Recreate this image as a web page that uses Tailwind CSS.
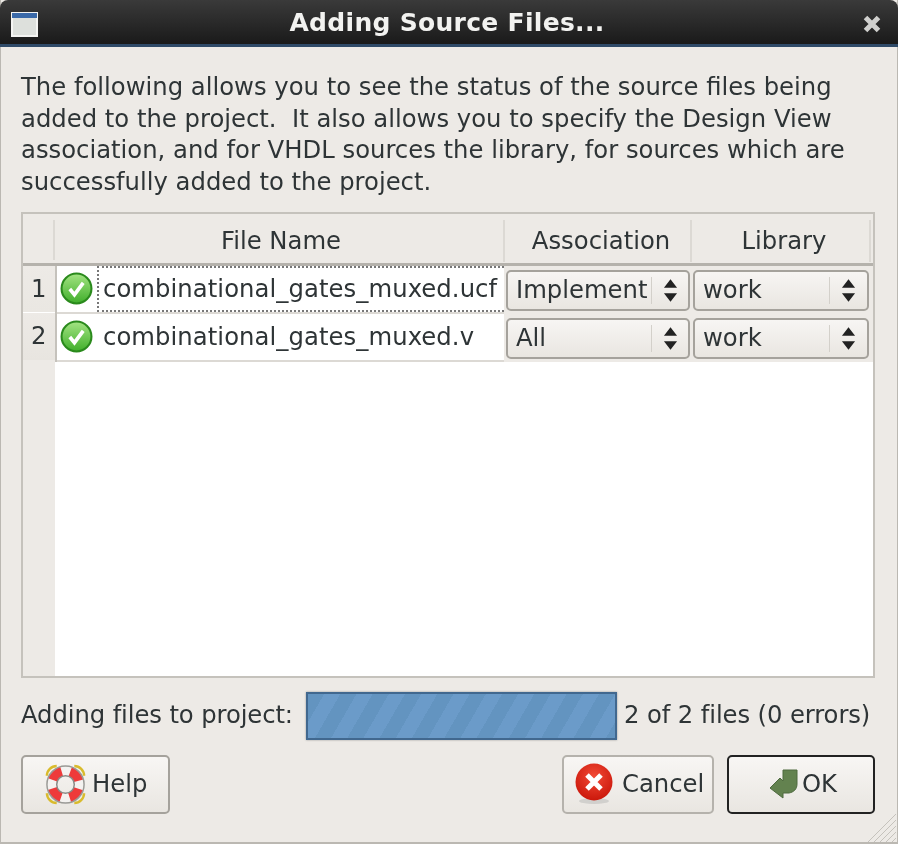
<!DOCTYPE html>
<html lang="en">
<head>
  <meta charset="UTF-8">
  <title>Adding Source Files...</title>
  <script src="https://cdn.jsdelivr.net/npm/@tailwindcss/browser@4"></script>
</head>
<body class="relative bg-[#edeae6] font-['DejaVu_Sans',sans-serif] text-[#2e3436] w-[898px] h-[844px] overflow-hidden blur-[0.6px] shadow-[inset_1px_-2px_0_#bbb8b2,inset_-1px_0_0_#bbb8b2]">
  <!-- title bar -->
  <div class="relative h-[47px] rounded-t-[8px] bg-gradient-to-b from-[#3a3a3a] via-[#2a2a2a] to-[#1a1a1a] flex items-center justify-center border-b-[3px] border-b-[#2f4a68] pt-[2px] pr-[4px]">
    <svg class="absolute left-[11px] top-[12px]" width="27" height="25" viewBox="0 0 27 25">
      <rect x="1" y="1" width="25" height="23" fill="#dde0dc" stroke="#f4f4f2" stroke-width="2"/>
      <rect x="1" y="1" width="25" height="5" fill="#3a69a8"/>
    </svg>
    <span class="text-[25px] font-bold text-[#f2f2f0] tracking-[0.3px]">Adding Source Files...</span>
    <svg class="absolute right-[17px] top-[15px]" width="18" height="18" viewBox="0 0 18 18">
      <path d="M2.5 2.5L15.5 15.5M15.5 2.5L2.5 15.5" stroke="#d0d0ce" stroke-width="5"/>
    </svg>
  </div>

  <div class="pl-[21px] pr-[23px] text-[24.3px]">
    <p class="pt-[24px] leading-[31.7px] whitespace-pre">The following allows you to see the status of the source files being
added to the project.  It also allows you to specify the Design View
association, and for VHDL sources the library, for sources which are
successfully added to the project.</p>

    <!-- table -->
    <div class="mt-[14px] h-[466px] w-[854px] border-2 border-[#c5c2bc] flex flex-col bg-white">
      <div class="flex h-[52px] bg-[#edeae6] border-b-[3px] border-b-[#b5b2ac] pl-[1px] pt-[6px]">
        <div class="w-[31px] h-[40px] border-r-2 border-r-[#dcd9d4]"></div>
        <div class="w-[450px] h-[42px] pl-[4px] border-r-2 border-r-[#dcd9d4] flex items-center justify-center">File Name</div>
        <div class="w-[187px] h-[42px] pl-[7px] border-r-2 border-r-[#dcd9d4] flex items-center justify-center">Association</div>
        <div class="w-[179px] h-[42px] pl-[7px] border-r-2 border-r-[#dcd9d4] flex items-center justify-center">Library</div>
      </div>
      <div class="flex-1 flex">
        <div class="w-[32px] bg-[#edeae6] flex flex-col">
          <div class="h-[47px] pl-[8px] flex items-center bg-gradient-to-b from-[#edeae6] to-[#eae7e2] border-b border-b-white">1</div>
          <div class="h-[47px] pl-[8px] flex items-center bg-gradient-to-b from-[#edeae6] to-[#e8e5e0]">2</div>
        </div>
        <div class="flex-1">
          <div class="flex h-[48px] border-l-2 border-l-[#c5c2bc]">
            <div class="w-[447px] h-[48px] flex items-center border-b-2 border-b-[#dcd9d4]">
              <svg class="ml-[3px] shrink-0" width="33" height="33" viewBox="0 0 32 32">
                <defs><linearGradient id="g1" x1="0" y1="0" x2="0" y2="1"><stop offset="0" stop-color="#a4e483"/><stop offset="1" stop-color="#3fae2a"/></linearGradient></defs>
                <circle cx="16" cy="16" r="14.5" fill="url(#g1)" stroke="#2a8a1c" stroke-width="2"/>
                <path d="M9.5 16.5L14 22L22.5 10.5" fill="none" stroke="#fff" stroke-width="3.5"/>
              </svg>
              <div class="ml-[4px] h-[46px] flex-1 flex items-center pl-[4px] border-2 border-dotted border-[#777] border-r-0 overflow-hidden whitespace-nowrap tracking-[0.06px]">combinational_gates_muxed.ucf</div>
            </div>
            <div class="w-[187px] pl-[2px] pr-[1px] pt-[4px] bg-[#edeae6]"><div class="h-[41px] rounded-[5px] border-2 border-[#a5a29c] bg-gradient-to-b from-[#f7f5f3] to-[#e9e6e1] flex items-center pl-[8px] relative"><span>Implement</span><span class="absolute right-[36px] top-[5px] w-[1px] h-[27px] bg-[#d3d0ca]"></span><svg class="absolute right-[10px] top-[6px]" width="15" height="25" viewBox="0 0 16 26"><path d="M8 1L15 10H1ZM1 16H15L8 25Z" fill="#222"/></svg></div></div>
            <div class="w-[182px] pl-[2px] pr-[4px] pt-[4px] bg-[#edeae6]"><div class="h-[41px] rounded-[5px] border-2 border-[#a5a29c] bg-gradient-to-b from-[#f7f5f3] to-[#e9e6e1] flex items-center pl-[8px] relative"><span>work</span><span class="absolute right-[37px] top-[5px] w-[1px] h-[27px] bg-[#d3d0ca]"></span><svg class="absolute right-[11px] top-[6px]" width="15" height="25" viewBox="0 0 16 26"><path d="M8 1L15 10H1ZM1 16H15L8 25Z" fill="#222"/></svg></div></div>
          </div>
          <div class="flex h-[48px] border-l-2 border-l-[#c5c2bc]">
            <div class="w-[447px] h-[48px] flex items-center border-b-2 border-b-[#dcd9d4]">
              <svg class="ml-[3px] shrink-0" width="33" height="33" viewBox="0 0 32 32">
                <defs><linearGradient id="g2" x1="0" y1="0" x2="0" y2="1"><stop offset="0" stop-color="#a4e483"/><stop offset="1" stop-color="#3fae2a"/></linearGradient></defs>
                <circle cx="16" cy="16" r="14.5" fill="url(#g2)" stroke="#2a8a1c" stroke-width="2"/>
                <path d="M9.5 16.5L14 22L22.5 10.5" fill="none" stroke="#fff" stroke-width="3.5"/>
              </svg>
              <div class="ml-[10px] whitespace-nowrap tracking-[0.06px]">combinational_gates_muxed.v</div>
            </div>
            <div class="w-[187px] pl-[2px] pr-[1px] pt-[4px] bg-[#edeae6]"><div class="h-[41px] rounded-[5px] border-2 border-[#a5a29c] bg-gradient-to-b from-[#f7f5f3] to-[#e9e6e1] flex items-center pl-[8px] relative"><span>All</span><span class="absolute right-[36px] top-[5px] w-[1px] h-[27px] bg-[#d3d0ca]"></span><svg class="absolute right-[10px] top-[6px]" width="15" height="25" viewBox="0 0 16 26"><path d="M8 1L15 10H1ZM1 16H15L8 25Z" fill="#222"/></svg></div></div>
            <div class="w-[182px] pl-[2px] pr-[4px] pt-[4px] bg-[#edeae6]"><div class="h-[41px] rounded-[5px] border-2 border-[#a5a29c] bg-gradient-to-b from-[#f7f5f3] to-[#e9e6e1] flex items-center pl-[8px] relative"><span>work</span><span class="absolute right-[37px] top-[5px] w-[1px] h-[27px] bg-[#d3d0ca]"></span><svg class="absolute right-[11px] top-[6px]" width="15" height="25" viewBox="0 0 16 26"><path d="M8 1L15 10H1ZM1 16H15L8 25Z" fill="#222"/></svg></div></div>
          </div>
        </div>
      </div>
    </div>

    <!-- progress -->
    <div class="mt-[14px] flex items-center h-[48px] tracking-[-0.1px]">
      <span class="whitespace-nowrap w-[285px] pb-[2px]">Adding files to project:</span>
      <div class="w-[311px] h-[48px] border-2 border-[#41688f] bg-[repeating-linear-gradient(120deg,#6394c0_0px,#6394c0_14px,#6b9bc9_14px,#6b9bc9_28px)] shadow-[0_0_2px_#999]"></div>
      <span class="ml-[7px] whitespace-nowrap pb-[2px]">2 of 2 files (0 errors)</span>
    </div>

    <!-- buttons -->
    <div class="mt-[15px] flex">
      <button class="w-[149px] h-[59px] rounded-[5px] border-2 border-[#a5a29c] bg-gradient-to-b from-[#f8f6f4] to-[#e9e6e1] flex items-center pl-[21px]">
        <svg width="43" height="43" viewBox="0 0 44 44">
          <g fill="none" stroke="#d9bb2c" stroke-width="2.5">
            <path d="M3 13A10 10 0 0 1 13 3"/><path d="M31 3A10 10 0 0 1 41 13"/><path d="M41 31A10 10 0 0 1 31 41"/><path d="M13 41A10 10 0 0 1 3 31"/>
          </g>
          <circle cx="22" cy="22" r="14" fill="none" stroke="#f4f2f0" stroke-width="10"/>
          <circle cx="22" cy="22" r="14" fill="none" stroke="#ee3a3a" stroke-width="10" stroke-dasharray="13 9" stroke-dashoffset="17.5"/>
          <circle cx="22" cy="22" r="19" fill="none" stroke="#9a9a96" stroke-width="1.5"/>
          <circle cx="22" cy="22" r="9" fill="none" stroke="#8a8a86" stroke-width="1.5"/>
        </svg>
        <span class="ml-[5px]">Help</span>
      </button>
      <button class="ml-auto w-[152px] h-[59px] rounded-[5px] border-2 border-[#b5b2ac] bg-gradient-to-b from-[#f8f6f4] to-[#e9e6e1] flex items-center pl-[10px]">
        <svg width="40" height="42" viewBox="0 0 40 42">
          <defs><radialGradient id="r1" cx="0.5" cy="0.35" r="0.7"><stop offset="0" stop-color="#f24a36"/><stop offset="1" stop-color="#c81408"/></radialGradient></defs>
          <ellipse cx="20" cy="38" rx="15" ry="3" fill="#aaa" opacity="0.4"/>
          <circle cx="20" cy="19" r="18.5" fill="url(#r1)"/>
          <path d="M13 12L27 26M27 12L13 26" stroke="#fff" stroke-width="5"/>
        </svg>
        <span class="ml-[8px]">Cancel</span>
      </button>
      <button class="ml-[13px] w-[148px] h-[59px] rounded-[5px] border-2 border-[#222] bg-gradient-to-b from-[#f8f6f4] to-[#e9e6e1] flex items-center pl-[40px]">
        <svg width="30" height="32" viewBox="0 0 30 32">
          <path d="M14 2H28V16C28 21 25 24 20 25H14V30L1 20L11 10L14 13Z" fill="#63824f" stroke="#4e6a3f"/>
        </svg>
        <span class="ml-[3px]">OK</span>
      </button>
    </div>
  </div>
  <svg class="absolute right-[2px] bottom-[2px]" width="30" height="30" viewBox="0 0 30 30">
    <path d="M2 30L30 2M8 30L30 8M14 30L30 14M20 30L30 20M26 30L30 26" stroke="#c5c2bc"/>
  </svg>
</body>
</html>
